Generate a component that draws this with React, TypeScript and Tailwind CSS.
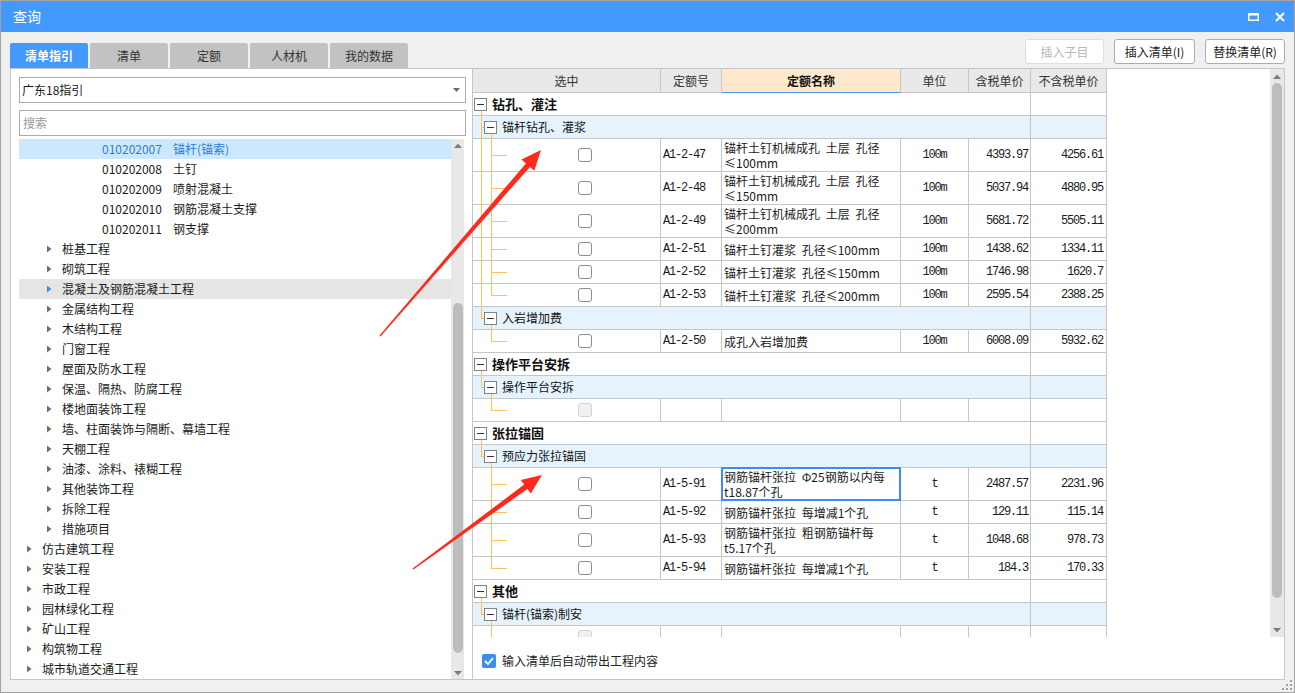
import React from "react";

type TreeItem = {
  level: 1 | 2 | 3;
  label: string;
  code?: string;
  selected?: boolean;
  hover?: boolean;
};

const tree: TreeItem[] = [
  { level: 3, code: "010202007", label: "锚杆(锚索)", selected: true },
  { level: 3, code: "010202008", label: "土钉" },
  { level: 3, code: "010202009", label: "喷射混凝土" },
  { level: 3, code: "010202010", label: "钢筋混凝土支撑" },
  { level: 3, code: "010202011", label: "钢支撑" },
  { level: 2, label: "桩基工程" },
  { level: 2, label: "砌筑工程" },
  { level: 2, label: "混凝土及钢筋混凝土工程", hover: true },
  { level: 2, label: "金属结构工程" },
  { level: 2, label: "木结构工程" },
  { level: 2, label: "门窗工程" },
  { level: 2, label: "屋面及防水工程" },
  { level: 2, label: "保温、隔热、防腐工程" },
  { level: 2, label: "楼地面装饰工程" },
  { level: 2, label: "墙、柱面装饰与隔断、幕墙工程" },
  { level: 2, label: "天棚工程" },
  { level: 2, label: "油漆、涂料、裱糊工程" },
  { level: 2, label: "其他装饰工程" },
  { level: 2, label: "拆除工程" },
  { level: 2, label: "措施项目" },
  { level: 1, label: "仿古建筑工程" },
  { level: 1, label: "安装工程" },
  { level: 1, label: "市政工程" },
  { level: 1, label: "园林绿化工程" },
  { level: 1, label: "矿山工程" },
  { level: 1, label: "构筑物工程" },
  { level: 1, label: "城市轨道交通工程" },
];

type Row =
  | { kind: "g1"; label: string }
  | { kind: "g2"; label: string; last: boolean }
  | {
      kind: "item";
      code: string;
      name: string[];
      unit: string;
      tax: string;
      net: string;
      cont: boolean;
      last: boolean;
      selected?: boolean;
      empty?: boolean;
    };

const rows: Row[] = [
  { kind: "g1", label: "钻孔、灌注" },
  { kind: "g2", label: "锚杆钻孔、灌浆", last: false },
  { kind: "item", code: "A1-2-47", name: ["锚杆土钉机械成孔 土层 孔径", "≤100mm"], unit: "100m", tax: "4393.97", net: "4256.61", cont: true, last: false },
  { kind: "item", code: "A1-2-48", name: ["锚杆土钉机械成孔 土层 孔径", "≤150mm"], unit: "100m", tax: "5037.94", net: "4880.95", cont: true, last: false },
  { kind: "item", code: "A1-2-49", name: ["锚杆土钉机械成孔 土层 孔径", "≤200mm"], unit: "100m", tax: "5681.72", net: "5505.11", cont: true, last: false },
  { kind: "item", code: "A1-2-51", name: ["锚杆土钉灌浆 孔径≤100mm"], unit: "100m", tax: "1438.62", net: "1334.11", cont: true, last: false },
  { kind: "item", code: "A1-2-52", name: ["锚杆土钉灌浆 孔径≤150mm"], unit: "100m", tax: "1746.98", net: "1620.7", cont: true, last: false },
  { kind: "item", code: "A1-2-53", name: ["锚杆土钉灌浆 孔径≤200mm"], unit: "100m", tax: "2595.54", net: "2388.25", cont: true, last: true },
  { kind: "g2", label: "入岩增加费", last: true },
  { kind: "item", code: "A1-2-50", name: ["成孔入岩增加费"], unit: "100m", tax: "6008.09", net: "5932.62", cont: false, last: true },
  { kind: "g1", label: "操作平台安拆" },
  { kind: "g2", label: "操作平台安拆", last: true },
  { kind: "item", code: "", name: [""], unit: "", tax: "", net: "", cont: false, last: true, empty: true },
  { kind: "g1", label: "张拉锚固" },
  { kind: "g2", label: "预应力张拉锚固", last: true },
  { kind: "item", code: "A1-5-91", name: ["钢筋锚杆张拉 Φ25钢筋以内每", "t18.87个孔"], unit: "t", tax: "2487.57", net: "2231.96", cont: false, last: false, selected: true },
  { kind: "item", code: "A1-5-92", name: ["钢筋锚杆张拉 每增减1个孔"], unit: "t", tax: "129.11", net: "115.14", cont: false, last: false },
  { kind: "item", code: "A1-5-93", name: ["钢筋锚杆张拉 粗钢筋锚杆每", "t5.17个孔"], unit: "t", tax: "1048.68", net: "978.73", cont: false, last: false },
  { kind: "item", code: "A1-5-94", name: ["钢筋锚杆张拉 每增减1个孔"], unit: "t", tax: "184.3", net: "170.33", cont: false, last: true },
  { kind: "g1", label: "其他" },
  { kind: "g2", label: "锚杆(锚索)制安", last: true },
  { kind: "item", code: "", name: [""], unit: "", tax: "", net: "", cont: false, last: false, empty: true },
];

const MONO = "[font-family:'Liberation_Mono',monospace] tracking-[-1.2px]";
const LINE = "bg-[#ffbf5e]";
const GRID = "border-[#c6c6c6]";

function Tri({ color }: { color: string }) {
  return (
    <svg width="5" height="8" viewBox="0 0 5 8">
      <path d="M0 0.5 L4.5 4 L0 7.5 Z" fill={color} />
    </svg>
  );
}

function Caret({ up }: { up?: boolean }) {
  return (
    <svg width="8" height="5" viewBox="0 0 8 5">
      <path d={up ? "M0 5 L4 0.5 L8 5 Z" : "M0 0 L8 0 L4 4.5 Z"} fill="#7d7d7d" />
    </svg>
  );
}

function TreeRow({ item }: { item: TreeItem }) {
  const bg = item.selected ? "bg-[#cce8ff]" : item.hover ? "bg-[#e5e5e5]" : "";
  if (item.level === 3) {
    return (
      <div className={`flex h-[20px] items-center pl-[83px] leading-[20px] ${bg} ${item.selected ? "text-[#2f7bd6]" : ""}`}>
        <span className="w-[71px]">{item.code}</span>
        <span>{item.label}</span>
      </div>
    );
  }
  return (
    <div className={`flex h-[20px] items-center leading-[20px] ${item.level === 1 ? "pl-[8px]" : "pl-[28px]"} ${bg}`}>
      <span className="flex w-[15px] items-center">
        <Tri color={item.hover ? "#3c8ef0" : "#6e6e6e"} />
      </span>
      <span>{item.label}</span>
    </div>
  );
}

function MinusBox() {
  return (
    <span className="relative flex h-[13px] w-[13px] shrink-0 items-center justify-center border border-[#828282] bg-white">
      <span className="h-px w-[7px] bg-[#333]" />
    </span>
  );
}

function TableRow({ row }: { row: Row }) {
  if (row.kind === "g1") {
    return (
      <div className={`flex h-[23px] shrink-0 border-b ${GRID}`}>
        <div className={`relative flex w-[558px] items-center border-r pl-px ${GRID}`}>
          <span className={`absolute bottom-[-1px] left-[8px] top-[17px] w-px ${LINE}`} />
          <MinusBox />
          <span className="ml-[5px] text-[13px] font-bold text-[#111]">{row.label}</span>
        </div>
        <div className={`w-[76px] border-r ${GRID}`} />
      </div>
    );
  }
  if (row.kind === "g2") {
    return (
      <div className={`flex h-[23px] shrink-0 border-b bg-[#e6f3fd] ${GRID}`}>
        <div className={`relative flex w-[558px] items-center border-r pl-[11px] ${GRID}`}>
          <span className={`absolute left-[8px] top-0 w-px ${LINE} ${row.last ? "h-[11px]" : "bottom-[-1px]"}`} />
          <span className={`absolute left-[8px] top-[11px] h-px w-[4px] ${LINE}`} />
          <span className={`absolute bottom-[-1px] left-[18px] top-[17px] w-px ${LINE}`} />
          <MinusBox />
          <span className="ml-[5px] text-[#111]">{row.label}</span>
        </div>
        <div className={`w-[76px] border-r ${GRID}`} />
      </div>
    );
  }
  const tall = row.name.length > 1;
  return (
    <div className={`flex shrink-0 border-b ${GRID} ${tall ? "h-[33px]" : "h-[23px]"}`}>
      <div className={`relative flex w-[188px] items-center border-r pl-[105px] ${GRID}`}>
        {row.cont && <span className={`absolute bottom-[-1px] left-[8px] top-0 w-px ${LINE}`} />}
        <span
          className={`absolute left-[18px] top-0 w-px ${LINE} ${
            row.last ? (tall ? "h-[16px]" : "h-[11px]") : "bottom-[-1px]"
          }`}
        />
        <span className={`absolute left-[18px] h-px w-[16px] ${LINE} ${tall ? "top-[16px]" : "top-[11px]"}`} />
        <span
          className={`h-[14px] w-[14px] rounded-[3px] border ${
            row.empty ? "border-[#d2d2d2] bg-[#f1f1f1]" : "border-[#8c8c8c] bg-white"
          }`}
        />
      </div>
      <div className={`flex w-[61px] items-center border-r pl-[2px] ${GRID} ${MONO}`}>{row.code}</div>
      <div className={`relative flex w-[179px] flex-col justify-center border-r pl-[2px] leading-[15px] [word-spacing:3px] ${GRID}`}>
        {row.selected && <span className="absolute -inset-px border-2 border-[#3b8ef0]" />}
        {row.name.map((l, i) => (
          <span key={i} className="whitespace-pre">
            {l}
          </span>
        ))}
      </div>
      <div className={`flex w-[68px] items-center justify-center border-r ${GRID} ${MONO}`}>{row.unit}</div>
      <div className={`flex w-[62px] items-center justify-end border-r pr-[2px] ${GRID} ${MONO}`}>{row.tax}</div>
      <div className={`flex w-[76px] items-center justify-end border-r pr-[3px] ${GRID} ${MONO}`}>{row.net}</div>
    </div>
  );
}

function arrow(sx: number, sy: number, tx: number, ty: number) {
  const L = 20;
  const W = 8.5;
  const w1 = 2.7;
  const w0 = 0.7;
  const dx = tx - sx;
  const dy = ty - sy;
  const len = Math.hypot(dx, dy);
  const ux = dx / len;
  const uy = dy / len;
  const nx = -uy;
  const ny = ux;
  const bx = tx - ux * L;
  const by = ty - uy * L;
  const p = [
    [sx + nx * w0, sy + ny * w0],
    [bx + nx * w1, by + ny * w1],
    [bx + nx * W, by + ny * W],
    [tx, ty],
    [bx - nx * W, by - ny * W],
    [bx - nx * w1, by - ny * w1],
    [sx - nx * w0, sy - ny * w0],
  ];
  return p.map((q) => `${q[0].toFixed(1)},${q[1].toFixed(1)}`).join(" ");
}

export default function App() {
  const tabs = ["清单指引", "清单", "定额", "人材机", "我的数据"];
  return (
    <div className="relative flex h-[693px] w-[1295px] flex-col overflow-hidden border border-[#a3a3a3] bg-[#f0f0f0] text-[12px] text-[#1a1a1a] [font-family:'Noto_Sans_CJK_SC','Noto_Sans',sans-serif]">
      {/* Title bar */}
      <div className="flex h-[31px] shrink-0 items-center justify-between bg-[#4499ff] pl-[12px] pr-[9px]">
        <span className="text-[14px] text-white">查询</span>
        <div className="flex items-center gap-[16px]">
          <svg width="11" height="8" viewBox="0 0 11 8">
            <rect x="0.75" y="0.75" width="9.5" height="6.5" fill="none" stroke="#fff" strokeWidth="1.5" />
            <rect x="0" y="0" width="11" height="2.5" fill="#fff" />
          </svg>
          <svg width="10" height="10" viewBox="0 0 10 10">
            <path d="M1 1 L9 9 M9 1 L1 9" stroke="#fff" strokeWidth="2" />
          </svg>
        </div>
      </div>

      {/* Tabs + buttons */}
      <div className="flex h-[36px] shrink-0 items-start justify-between px-[9px]">
        <div className="mt-[11px] flex gap-[2px]">
          {tabs.map((t, i) => (
            <div
              key={t}
              className={`flex h-[25px] w-[78px] items-center justify-center rounded-t-[2px] ${
                i === 0 ? "bg-[#4499ff] font-bold text-white" : "bg-[#c2c2c2] text-[#333]"
              }`}
            >
              {t}
            </div>
          ))}
        </div>
        <div className="mt-[7px] flex gap-[10px]">
          <button type="button" className="h-[25px] w-[79px] rounded-[3px] border border-[#dedede] bg-white text-[#b8b8b8]">
            插入子目
          </button>
          <button type="button" className="h-[25px] w-[81px] rounded-[3px] border border-[#adadad] bg-white text-[#222]">
            插入清单(I)
          </button>
          <button type="button" className="h-[25px] w-[80px] rounded-[3px] border border-[#adadad] bg-white text-[#222]">
            替换清单(R)
          </button>
        </div>
      </div>

      {/* Panels */}
      <div className="flex h-[612px] shrink-0 px-[9px]">
        {/* Left */}
        <div className="flex w-[462px] shrink-0 flex-col border border-r-0 border-[#c6c6c6] bg-white">
          <div className="ml-[8px] mt-[8px] flex h-[26px] w-[447px] shrink-0 items-center justify-between border border-[#ababab] pl-[2px] pr-[5px]">
            <span>广东18指引</span>
            <svg width="7" height="4" viewBox="0 0 7 4">
              <path d="M0 0 L7 0 L3.5 4 Z" fill="#6a6a6a" />
            </svg>
          </div>
          <div className="ml-[8px] mt-[7px] flex h-[26px] w-[447px] shrink-0 items-center border border-[#ababab] pl-[3px] text-[#9a9a9a]">
            搜索
          </div>
          <div className="ml-[8px] mt-[3px] flex min-h-0 w-[445px] flex-1 overflow-hidden">
            <div className="w-[432px] shrink-0">
              {tree.map((t, i) => (
                <TreeRow key={i} item={t} />
              ))}
            </div>
            <div className="flex w-[13px] shrink-0 flex-col items-center bg-[#e8e8e8]">
              <div className="flex h-[12px] items-center">
                <Caret up />
              </div>
              <div className="h-[152px]" />
              <div className="h-[350px] w-[10px] rounded-full bg-[#bdbdbd]" />
              <div className="flex-1" />
              <div className="flex h-[12px] items-center">
                <Caret />
              </div>
            </div>
          </div>
        </div>

        {/* Right */}
        <div className="flex w-[813px] shrink-0 flex-col border border-[#c6c6c6] bg-white">
          <div className="flex h-[568px] shrink-0">
            <div className="flex min-w-0 flex-1 flex-col overflow-hidden">
              <div className="flex h-[24px] shrink-0 text-[#333]">
                <div className={`flex w-[188px] items-center justify-center border-b border-r bg-[#e9e9e9] ${GRID}`}>选中</div>
                <div className={`flex w-[61px] items-center justify-center border-b border-r bg-[#e9e9e9] ${GRID}`}>定额号</div>
                <div className={`flex w-[179px] items-center justify-center border-b border-r border-b-[#4a94e6] bg-[#ffe8cc] font-bold text-[#111] ${GRID}`}>
                  定额名称
                </div>
                <div className={`flex w-[68px] items-center justify-center border-b border-r bg-[#e9e9e9] ${GRID}`}>单位</div>
                <div className={`flex w-[62px] items-center justify-center border-b border-r bg-[#e9e9e9] ${GRID}`}>含税单价</div>
                <div className={`flex w-[76px] items-center justify-center border-b border-r bg-[#e9e9e9] ${GRID}`}>不含税单价</div>
              </div>
              {rows.map((r, i) => (
                <div key={i} className="w-[634px] shrink-0">
                  <TableRow row={r} />
                </div>
              ))}
            </div>
            <div className="flex w-[14px] shrink-0 flex-col items-center bg-[#e8e8e8]">
              <div className="flex h-[14px] items-center">
                <Caret up />
              </div>
              <div className="h-[515px] w-[10px] rounded-full bg-[#bdbdbd]" />
              <div className="flex-1" />
              <div className="flex h-[14px] items-center">
                <Caret />
              </div>
            </div>
          </div>
          <div className="flex h-[42px] shrink-0 items-start pl-[9px] pt-[17px]">
            <div className="flex items-center gap-[6px]">
              <span className="flex h-[14px] w-[14px] items-center justify-center rounded-[2px] bg-[#3b8ef0]">
                <svg width="10" height="8" viewBox="0 0 10 8">
                  <path d="M1 4 L4 7 L9 1" fill="none" stroke="#fff" strokeWidth="1.8" />
                </svg>
              </span>
              <span className="leading-[14px] text-[#222]">输入清单后自动带出工程内容</span>
            </div>
          </div>
        </div>
      </div>

      {/* Bottom strip with resize grip */}
      <div className="flex flex-1 items-end justify-end pb-[1px] pr-[1px]">
        <svg width="11" height="11" viewBox="0 0 11 11">
          <g fill="#a0a0a0">
            <rect x="8" y="0" width="2" height="2" />
            <rect x="4" y="4" width="2" height="2" />
            <rect x="8" y="4" width="2" height="2" />
            <rect x="0" y="8" width="2" height="2" />
            <rect x="4" y="8" width="2" height="2" />
            <rect x="8" y="8" width="2" height="2" />
          </g>
        </svg>
      </div>

      {/* Red annotation arrows */}
      <svg className="pointer-events-none absolute left-[-1px] top-[-1px]" width="1295" height="693" viewBox="0 0 1295 693">
        <polygon points={arrow(380, 336, 541, 150)} fill="#ff2a1c" />
        <polygon points={arrow(413, 569, 542, 475)} fill="#ff2a1c" />
      </svg>
    </div>
  );
}
